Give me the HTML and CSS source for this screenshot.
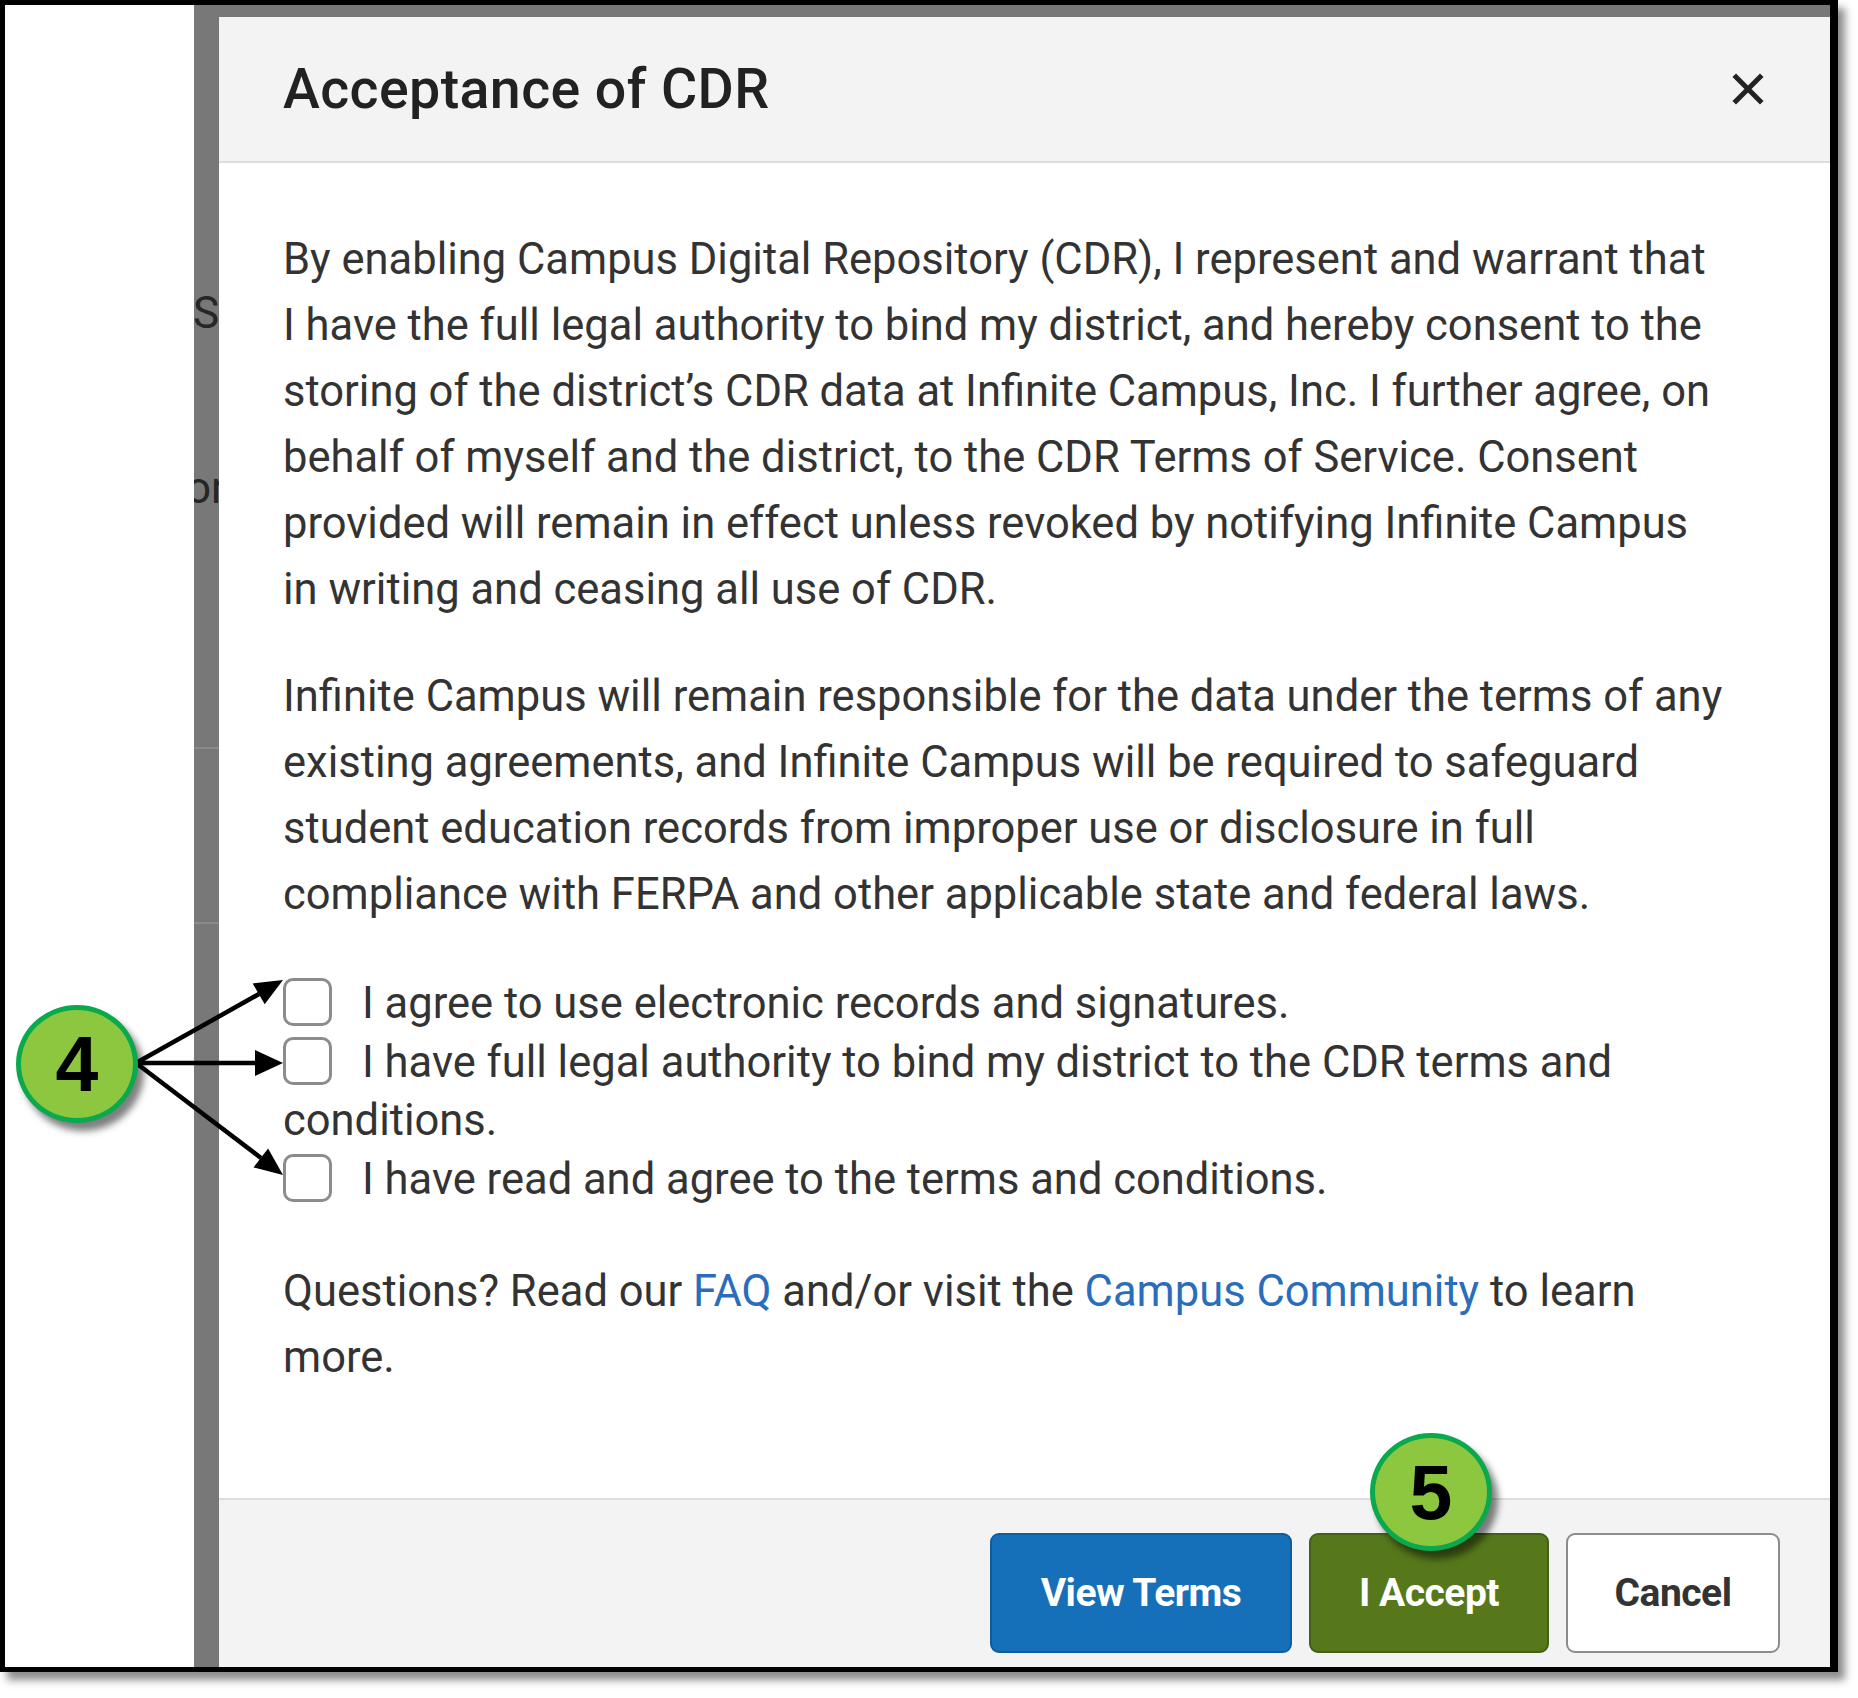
FILE: index.html
```html
<!DOCTYPE html>
<html lang="en">
<head>
<meta charset="utf-8">
<title>Acceptance of CDR</title>
<link rel="stylesheet" href="styles.css">
</head>
<body>
<div class="frame">
  <div class="gutter"></div>
  <div class="backdrop">
    <div class="peek">
      <div class="peek-s">Sl</div>
      <div class="peek-or">or</div>
      <div class="peek-line first"></div>
      <div class="peek-line second"></div>
    </div>
    <div class="dialog">
      <div class="dialog-header">
        <h1 class="title">Acceptance of CDR</h1>
        <svg class="close" width="32" height="32" viewBox="0 0 32 32" aria-label="Close"><path d="M4 4 L28 28 M28 4 L4 28" stroke="#222" stroke-width="5" stroke-linecap="square"/></svg>
      </div>
      <div class="dialog-body">
        <p>By enabling Campus Digital Repository (CDR), I represent and warrant that<br>I have the full legal authority to bind my district, and hereby consent to the storing of the district’s CDR data at Infinite Campus, Inc. I further agree, on behalf of myself and the district, to the CDR Terms of Service. Consent provided will remain in effect unless revoked by notifying Infinite Campus<br>in writing and ceasing all use of CDR.</p>
        <p class="p2">Infinite Campus will remain responsible for the data under the terms of any existing agreements, and Infinite Campus will be required to safeguard student education records from improper use or disclosure in full compliance with FERPA and other applicable state and federal laws.</p>
        <div class="checks">
          <div><span class="cb"></span>I agree to use electronic records and signatures.</div>
          <div><span class="cb"></span>I have full legal authority to bind my district to the CDR terms and conditions.</div>
          <div><span class="cb"></span>I have read and agree to the terms and conditions.</div>
        </div>
        <p class="questions">Questions? Read our <a class="link">FAQ</a> and/or visit the <a class="link">Campus Community</a> to learn more.</p>
      </div>
      <div class="dialog-footer">
        <button class="btn btn-view">View Terms</button>
        <button class="btn btn-accept">I Accept</button>
        <button class="btn btn-cancel">Cancel</button>
      </div>
    </div>
  </div>
</div>

<svg class="arrows" width="1858" height="1698" viewBox="0 0 1858 1698">
  <g stroke="#000" stroke-width="4.5" fill="none">
    <line x1="136" y1="1063" x2="259" y2="994"/>
    <line x1="136" y1="1063" x2="256" y2="1063"/>
    <line x1="136" y1="1063" x2="261" y2="1158"/>
  </g>
  <g fill="#000">
    <polygon points="283,980 264.7,1004.3 252.7,983.5"/>
    <polygon points="283,1063 255,1050 255,1076"/>
    <polygon points="283,1175 253.5,1167.4 268.1,1148.4"/>
  </g>
</svg>
<div class="badge badge-4">4</div>
<div class="badge badge-5">5</div>
</body>
</html>
```
FILE: styles.css
```css
html, body {
  margin: 0;
  padding: 0;
  background: #ffffff;
}

body {
  position: relative;
  width: 1858px;
  height: 1698px;
  overflow: hidden;
  font-family: Roboto, "Liberation Sans", Arial, sans-serif;
}

.frame {
  width: 1838px;
  height: 1672px;
  box-sizing: border-box;
  border-style: solid;
  border-color: #000;
  border-width: 5px 8px 5px 5px;
  display: flex;
  background: #fff;
  box-shadow: 7px 8px 8px rgba(0, 0, 0, 0.45);
}

.gutter {
  width: 189px;
  flex: none;
  background: #fff;
}

.backdrop {
  flex: 1;
  display: flex;
  background: #787878;
  min-width: 0;
}

.peek {
  width: 25px;
  flex: none;
  overflow: hidden;
  font-size: 44px;
  line-height: 66px;
  color: #262626;
  white-space: nowrap;
}

.peek-s {
  margin-top: 275px;
  margin-left: -1px;
}

.peek-or {
  margin-top: 109px;
  margin-left: -8px;
}

.peek-line {
  height: 2px;
  background: #8a8a8a;
}

.peek-line.first {
  margin-top: 226px;
}

.peek-line.second {
  margin-top: 173px;
}

.dialog {
  flex: 1;
  margin-top: 12px;
  display: flex;
  flex-direction: column;
  background: #fff;
  min-width: 0;
}

.dialog-header {
  height: 144px;
  flex: none;
  background: #f3f3f3;
  border-bottom: 2px solid #dddddd;
  display: flex;
  align-items: center;
  justify-content: space-between;
  padding: 0 66px 0 64px;
}

.title {
  margin: 0;
  font-size: 55.5px;
  font-weight: 500;
  color: #222;
  letter-spacing: 0.4px;
}

.close {
  display: block;
}

.dialog-body {
  flex: 1;
  padding: 64px 90px 0 64px;
  font-size: 43.5px;
  line-height: 66px;
  color: #333;
}

.dialog-body p {
  margin: 0;
}

.dialog-body .p2 {
  margin-top: 41px;
}

.checks {
  margin-top: 47px;
  line-height: 58.5px;
}

.cb {
  display: inline-block;
  width: 49px;
  height: 48px;
  box-sizing: border-box;
  border: 3px solid #8c8c8c;
  border-radius: 10px;
  background: #fff;
  vertical-align: -8px;
  margin-right: 30px;
}

.dialog-body .questions {
  margin-top: 50px;
}

.link {
  color: #2a6dbb;
  text-decoration: none;
}

.dialog-footer {
  height: 134px;
  flex: none;
  background: #f3f3f3;
  border-top: 2px solid #dddddd;
  display: flex;
  justify-content: flex-end;
  align-items: flex-start;
  gap: 17px;
  padding: 33px 50px 0 0;
}

.btn {
  height: 120px;
  box-sizing: border-box;
  border-radius: 9px;
  border: 2px solid;
  font-family: Roboto, "Liberation Sans", Arial, sans-serif;
  font-size: 39px;
  font-weight: 700;
  letter-spacing: -0.5px;
  padding: 0;
}

.btn-view {
  width: 302px;
  background: #1670b9;
  border-color: #0f5c9c;
  color: #fff;
}

.btn-accept {
  width: 240px;
  background: #56781b;
  border-color: #44611a;
  color: #fff;
}

.btn-cancel {
  width: 214px;
  background: #fff;
  border-color: #8c8c8c;
  color: #333;
}

.arrows {
  position: absolute;
  left: 0;
  top: 0;
  pointer-events: none;
}

.badge {
  position: absolute;
  width: 122px;
  height: 118px;
  box-sizing: border-box;
  border-radius: 50%;
  border: 5px solid #0aa94e;
  background: #8dc63f;
  box-shadow: 6px 8px 7px rgba(0, 0, 0, 0.5);
  display: flex;
  align-items: center;
  justify-content: center;
  font-family: "Liberation Sans", Arial, sans-serif;
  font-weight: 700;
  font-size: 77px;
  color: #000;
}

.badge-4 {
  left: 16px;
  top: 1005px;
}

.badge-5 {
  left: 1370px;
  top: 1433px;
}
```
